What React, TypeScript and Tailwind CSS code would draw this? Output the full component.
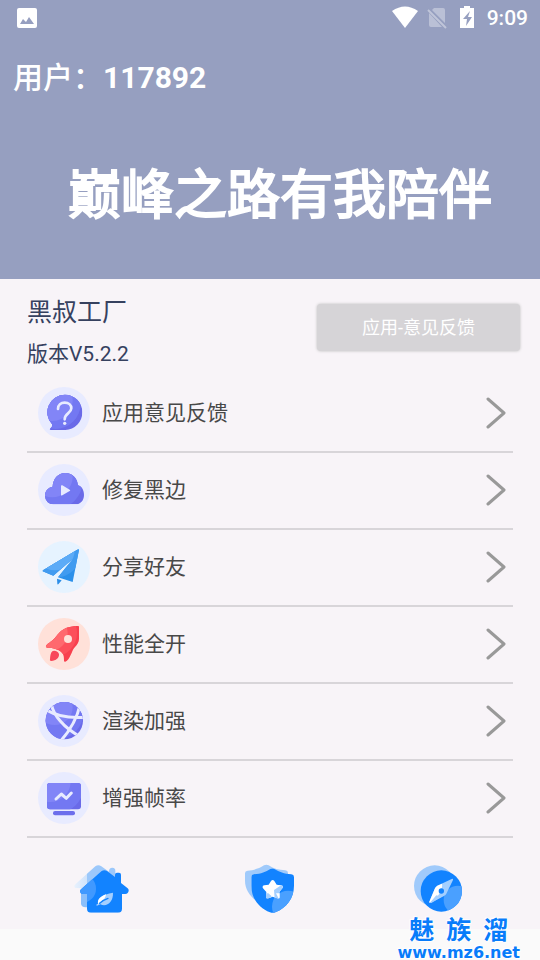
import React from 'react';

type IconProps = { className?: string };

const FeedbackIcon: React.FC<IconProps> = ({ className }) => (
  <svg className={className} viewBox="0 0 156 156" aria-hidden="true">
    <defs>
      <clipPath id="bubble">
        <path d="M80 23a52 53 0 0 1 2 106H40c-6 0-6-4-1-7 3-3 4-5 3-10A53 53 0 0 1 80 23Z" />
      </clipPath>
    </defs>
    <circle cx="78" cy="78" r="78" fill="#e8ebff" />
    <g clipPath="url(#bubble)">
      <rect width="156" height="156" fill="#6a6ae8" />
      <circle cx="52" cy="50" r="76" fill="#7378f2" />
      <circle cx="42" cy="40" r="62" fill="#8285f7" />
    </g>
    <path d="M60 66c0-12 9-19 20-19 12 0 20 7 20 17 0 15-20 14-20 33" fill="none" stroke="#e8ebff" strokeWidth="8" strokeLinecap="round" />
    <circle cx="80" cy="109" r="5" fill="#e8ebff" />
  </svg>
);

const CloudIcon: React.FC<IconProps> = ({ className }) => (
  <svg className={className} viewBox="0 0 156 156" aria-hidden="true">
    <defs>
      <clipPath id="cloud">
        <path d="M46 121a25 25 0 0 1-25-25c0-15 10-26 23-28 1-24 17-41 38-41s36 15 38 37c11 3 18 14 18 29 0 17-11 28-25 28Z" />
      </clipPath>
    </defs>
    <circle cx="78" cy="78" r="78" fill="#e8ebff" />
    <g clipPath="url(#cloud)">
      <rect width="156" height="156" fill="#6a6ae8" />
      <circle cx="52" cy="52" r="82" fill="#7378f2" />
      <circle cx="42" cy="38" r="62" fill="#8285f7" />
    </g>
    <path d="M69 66c0-3 2-3 4-2l22 13c2 1 2 3 0 4L73 94c-2 1-4 1-4-2Z" fill="#e8ebff" />
  </svg>
);

const PlaneIcon: React.FC<IconProps> = ({ className }) => (
  <svg className={className} viewBox="0 0 156 156" aria-hidden="true">
    <defs>
      <clipPath id="plane">
        <path d="M123 26 104 123 60 109 106 52 46 104 14 91c-1-1 0-3 2-4L120 25c2 0 3 0 3 1Z" />
      </clipPath>
    </defs>
    <circle cx="78" cy="78" r="78" fill="#e6f3ff" />
    <g clipPath="url(#plane)">
      <rect width="156" height="156" fill="#2b90ea" />
      <circle cx="55" cy="35" r="74" fill="#409bf0" />
      <circle cx="50" cy="28" r="60" fill="#5cabf7" />
    </g>
    <path d="M57 113 71 118 61 130c-2 1-3 0-3-2Z" fill="#2b8ee8" />
  </svg>
);

const RocketIcon: React.FC<IconProps> = ({ className }) => (
  <svg className={className} viewBox="0 0 156 156" aria-hidden="true">
    <defs>
      <clipPath id="rocket">
        <path d="M120 24c3 0 3 2 3 5v34c0 10-5 17-12 24-8 9-8 15-13 24-4 10-9 17-16 20-3 1-4 0-4-4 0-12-1-19-9-26-8-7-19-10-34-12-10 0-12-2-11-6 6-8 13-10 18-15 10-9 14-15 22-24 14-14 32-20 56-20Z" />
      </clipPath>
    </defs>
    <circle cx="78" cy="78" r="78" fill="#ffe1d9" />
    <g clipPath="url(#rocket)">
      <rect width="156" height="156" fill="#f8404e" />
      <circle cx="45" cy="45" r="72" fill="#fc505b" />
      <circle cx="35" cy="45" r="54" fill="#ff696e" />
    </g>
    <circle cx="90" cy="63" r="12" fill="#ffe1d9" />
    <path d="M43 100c5-4 17 0 20 8 1 13-9 19-23 21-4 0-5-2-4-5 1-10 1-19 7-24Z" fill="#f8485a" />
  </svg>
);

const GlobeIcon: React.FC<IconProps> = ({ className }) => (
  <svg className={className} viewBox="0 0 156 156" aria-hidden="true">
    <defs>
      <clipPath id="globe">
        <circle cx="79" cy="77" r="56" />
      </clipPath>
    </defs>
    <circle cx="78" cy="78" r="78" fill="#e8ebff" />
    <g clipPath="url(#globe)">
      <rect width="156" height="156" fill="#6a6ae8" />
      <circle cx="58" cy="54" r="78" fill="#7378f2" />
      <circle cx="50" cy="36" r="54" fill="#8285f7" />
      <g fill="none" stroke="#e8ebff" strokeWidth="9">
        <path d="M40 26C46 60 76 98 128 126" />
        <path d="M20 42q48 30 120 25" />
        <path d="M126 30C118 66 98 104 68 138" />
      </g>
    </g>
  </svg>
);

const MonitorIcon: React.FC<IconProps> = ({ className }) => (
  <svg className={className} viewBox="0 0 156 156" aria-hidden="true">
    <defs>
      <clipPath id="monitor">
        <rect x="27" y="33" width="102" height="79" rx="9" />
      </clipPath>
    </defs>
    <circle cx="78" cy="78" r="78" fill="#e8ebff" />
    <g clipPath="url(#monitor)">
      <rect width="156" height="156" fill="#6a6ae8" />
      <circle cx="55" cy="42" r="82" fill="#7378f2" />
      <circle cx="36" cy="28" r="62" fill="#8285f7" />
    </g>
    <rect x="45" y="117" width="66" height="13" rx="6" fill="#6c6eec" />
    <path d="m54 81 16-15 15 13 15-16" fill="none" stroke="#e8ebff" strokeWidth="9" strokeLinecap="round" strokeLinejoin="round" />
  </svg>
);

const HomeIcon: React.FC<IconProps> = ({ className }) => (
  <svg className={className} viewBox="66 40 168 150" aria-hidden="true">
    <defs>
      <linearGradient id="roofFade" x1="0" x2="1">
        <stop offset="0" stopColor="#e8f1fd" />
        <stop offset="0.35" stopColor="#d0e3fb" />
        <stop offset="0.35" stopColor="#9cc8fb" />
        <stop offset="1" stopColor="#9cc8fb" />
      </linearGradient>
      <clipPath id="house">
        <path d="M152 61q8-5 16 0l24 18V72q0-6 6-6h6q6 0 6 6v25l20 16c7 6 1 17-7 17h-10v44q0 12-12 12h-81q-12 0-12-12v-44h-11c-10 0-13-10-6-15Z" />
      </clipPath>
    </defs>
    <path d="M133 47q9-6 18 0l28 20-83 46-20-1c-7 0-8-7-2-12Z" fill="url(#roofFade)" />
    <path d="M174 74V62q0-11 10-11t9 11v20Z" fill="#9cc8fb" />
    <path d="M90 124h24v46h-10q-14 0-14-12Z" fill="#8abffb" />
    <g clipPath="url(#house)">
      <rect x="66" y="40" width="168" height="150" fill="#1283ff" />
      <circle cx="92" cy="114" r="43" fill="#4099ff" />
    </g>
    <path d="M141 159c-3-16 13-28 45-33 1 28-18 44-38 35l-10 4c-4-1-2-5 3-6Z" fill="#a4cfff" />
    <path d="M141 159c-2-13 8-22 24-28-2 14-11 21-24 28Z" fill="#fff" />
    <path d="M146 158c8-8 15-12 25-15" fill="none" stroke="#1283ff" strokeWidth="4" strokeLinecap="round" />
  </svg>
);

const ShieldIcon: React.FC<IconProps> = ({ className }) => (
  <svg className={className} viewBox="36 40 168 150" aria-hidden="true">
    <defs>
      <clipPath id="shield">
        <path d="M121 55q6-3 12 0c15 9 29 14 51 16q8 1 8 8v26c0 38-22 66-56 80q-8 3-16 0c-34-14-56-42-56-80V79q0-7 8-8c22-2 35-7 49-16Z" />
      </clipPath>
      <clipPath id="star">
        <path d="M123 91q5-6 10 0l7 11 13 2q9 2 4 9l-9 11 1 13q1 9-8 6l-13-5-12 5q-9 3-8-6l1-13-10-11q-5-7 4-9l13-2Z" />
      </clipPath>
    </defs>
    <path d="M102 44q7-4 14 0c15 10 30 14 50 15q8 1 8 8v35c-8 34-20 52-52 68-43-10-77-42-77-80V68q0-7 8-8c20-2 34-6 49-16Z" fill="#a0cafb" />
    <g clipPath="url(#shield)">
      <rect x="36" y="40" width="168" height="150" fill="#1283ff" />
      <circle cx="174" cy="168" r="48" fill="#4aa0ff" />
    </g>
    <g clipPath="url(#star)">
      <rect x="90" y="80" width="80" height="80" fill="#fff" />
      <path d="m132 118 30-20v60h-20c7-8 4-14-8-14Z M100 128h15l10 9-15 20h-10Z" fill="#a4cfff" />
      <path d="M138 128h12l-2 20Z" fill="#fff" />
    </g>
  </svg>
);

const CompassIcon: React.FC<IconProps> = ({ className }) => (
  <svg className={className} viewBox="93 40 168 150" aria-hidden="true">
    <defs>
      <clipPath id="compass">
        <circle cx="184" cy="121" r="62" />
      </clipPath>
    </defs>
    <circle cx="164" cy="106" r="62" fill="#a0cafb" />
    <g clipPath="url(#compass)">
      <rect x="93" y="40" width="168" height="150" fill="#1283ff" />
      <circle cx="234" cy="148" r="43" fill="#4aa0ff" />
    </g>
    <path d="m148 153 17-40q2-5 7-8l43-20q5-2 4 3l-20 41q-2 4-7 7l-41 21q-5 1-3-4Z" fill="#a4cfff" />
    <path d="m148 153 17-40q2-5 7-8l14-6c3 12-6 38-35 56q-4 1-3-2Z" fill="#fff" />
    <path d="m150 156 19-22 16 4-31 19Z" fill="#a4cfff" />
    <circle cx="184" cy="121" r="8" fill="#1283ff" />
  </svg>
);

const menuItems = [
  { label: '应用意见反馈', Icon: FeedbackIcon },
  { label: '修复黑边', Icon: CloudIcon },
  { label: '分享好友', Icon: PlaneIcon },
  { label: '性能全开', Icon: RocketIcon },
  { label: '渲染加强', Icon: GlobeIcon },
  { label: '增强帧率', Icon: MonitorIcon },
];

const tabs = [
  { label: '首页', Icon: HomeIcon },
  { label: '防护', Icon: ShieldIcon },
  { label: '发现', Icon: CompassIcon },
];

const StatusBar: React.FC = () => (
  <div className="flex h-9 items-center justify-between pl-4 pr-3">
    <svg className="h-6 w-6" viewBox="0 0 24 24" fill="#fff" aria-hidden="true">
      <path fillRule="evenodd" d="M3 2h16a2 2 0 0 1 2 2v16a2 2 0 0 1-2 2H3a2 2 0 0 1-2-2V4a2 2 0 0 1 2-2Zm1 16h14l-5-7-3 5-3-3Z" />
    </svg>
    <div className="flex items-center">
      <svg className="h-6 w-7" viewBox="0 0 28 24" fill="#fff" aria-hidden="true">
        <path d="M1 5q13-9 26 0L14 22Z" />
      </svg>
      <svg className="ml-2 h-6 w-5" viewBox="0 0 20 24" aria-hidden="true">
        <path d="M7 2h9q2 0 2 2v13L5 4ZM2 7l13 14H4q-2 0-2-2Z" fill="#fff" opacity="0.35" />
        <path d="m1 4 18 18" stroke="#fff" strokeWidth="2" opacity="0.4" />
      </svg>
      <svg className="ml-3 h-6 w-4" viewBox="0 0 16 24" aria-hidden="true">
        <path d="M5 0h6v2h4v20H1V2h4Z" fill="#fff" />
        <path d="m11 5-7 8h4l-1 7 6-9H9Z" fill="#969fc0" />
      </svg>
      <span className="ml-3 text-[21px] leading-6 font-medium">9:09</span>
    </div>
  </div>
);

const App: React.FC = () => {
  return (
    <div className="relative flex min-h-screen flex-col bg-[#f8f4f8] font-[Roboto,'Noto_Sans_CJK_SC',sans-serif]">
      <header className="bg-[#969fc0] pb-[43px] text-white">
        <StatusBar />
        <p className="mt-[22px] px-[13px] text-[30px] leading-10 font-bold">
          <span className="font-medium">用户：</span>117892
        </p>
        <h1 className="mt-[58px] pl-5 text-center text-[53px] leading-20 font-normal [-webkit-text-stroke:2px_#fff]">
          巅峰之路有我陪伴
        </h1>
      </header>

      <main className="grow">
        <section className="flex items-start justify-between pt-[18px] pr-5 pl-[27px] text-[#36415f]">
          <div>
            <h2 className="text-[25px] leading-8">黑叔工厂</h2>
            <p className="mt-[11px] text-[21px] leading-7">版本V5.2.2</p>
          </div>
          <button className="mt-[7px] h-[47px] w-[203px] rounded-sm bg-[#d6d4d7] text-lg text-white shadow-[0_0_3px_#bbb]">
            应用-意见反馈
          </button>
        </section>

        <ul className="mt-2 px-[27px]">
          {menuItems.map(({ label, Icon }) => (
            <li key={label} className="border-b-2 border-[#d8d5d9]">
              <button className="flex h-[75px] w-full items-center pr-[7px] pb-px pl-[11px] text-left">
                <Icon className="h-[52px] w-[52px]" />
                <span className="ml-3 grow text-[21px] leading-8 text-[#484848]">{label}</span>
                <svg className="h-8 w-5" viewBox="0 0 20 32" fill="none" stroke="#999" strokeWidth="3" strokeLinecap="round" strokeLinejoin="round" aria-hidden="true">
                  <path d="m2 2 16 14L2 30" />
                </svg>
              </button>
            </li>
          ))}
        </ul>
      </main>

      <nav className="grid grid-cols-3 px-4 pb-[15px]">
        {tabs.map(({ label, Icon }) => (
          <button key={label} aria-label={label} className="flex justify-center">
            <Icon className="h-[50px] w-14" />
          </button>
        ))}
      </nav>
      <div className="h-[31px] bg-[#fafafa]" />

      {/* site mark over the bottom corner */}
      <div className="absolute right-5 bottom-0 flex flex-col items-center text-[#087cfa] [text-shadow:0_0_2px_#fff,0_0_2px_#fff,1px_1px_1px_#fff,-1px_-1px_1px_#fff]">
        <div className="flex gap-3 text-[25px] leading-7 font-bold">
          <span>魅</span>
          <span>族</span>
          <span>溜</span>
        </div>
        <span className="font-['DejaVu_Sans',sans-serif] text-base leading-[15px] font-bold">www.mz6.net</span>
      </div>
    </div>
  );
};

export default App;
